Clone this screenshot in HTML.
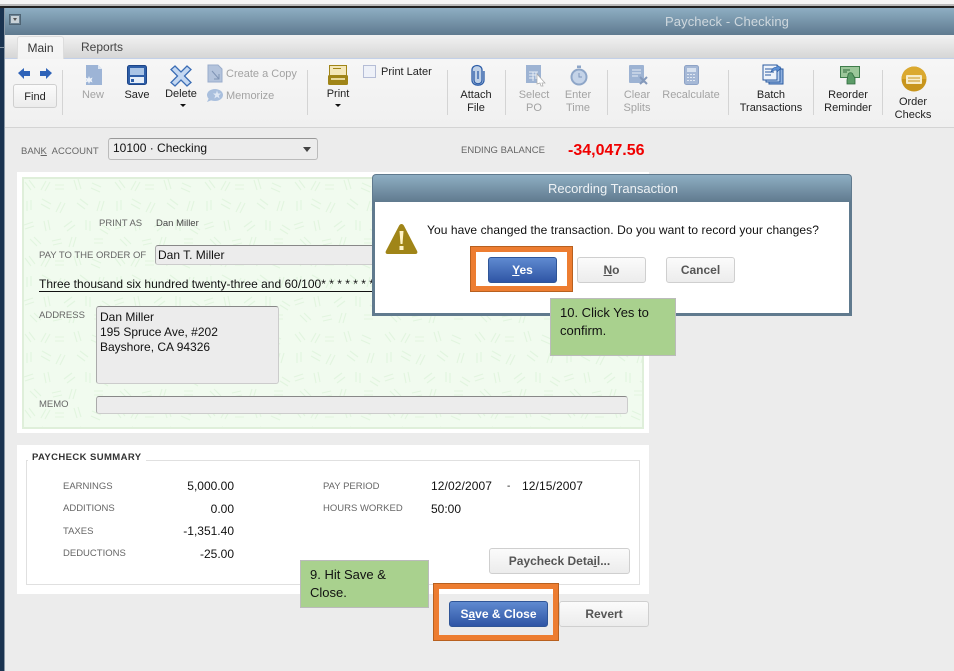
<!DOCTYPE html>
<html><head><meta charset="utf-8"><style>
html,body{margin:0;padding:0;width:954px;height:671px;overflow:hidden;background:#ececec}
body{position:relative;font-family:"Liberation Sans",sans-serif;color:#111}
.a{position:absolute;white-space:nowrap}
.t{position:absolute;white-space:nowrap;font-size:11px;line-height:13px;text-align:center;color:#222}
.d{color:#a3a3a3}
.sep{position:absolute;width:1px;background:#d4d4d4;top:70px;height:45px}
.l{position:absolute;white-space:nowrap;font-size:9.5px;line-height:12px;color:#666}
.v{position:absolute;white-space:nowrap;font-size:12px;line-height:14px;color:#111}
.r{text-align:right}
.btn{position:absolute;box-sizing:border-box;border:1px solid #cfcfcf;border-radius:3px;background:linear-gradient(#fbfbfb,#ececec);font-size:12px;font-weight:bold;color:#555;text-align:center;line-height:24px}
.pri{border:1px solid #2f5597;background:linear-gradient(#5f8ad0,#2f55a5);color:#fff}
.inp{position:absolute;box-sizing:border-box;background:#ececec;border:1px solid #ccc;border-top:1px solid #888;border-left-color:#aaa;border-radius:3px}
.org{position:absolute;box-sizing:border-box;border:6px solid #ed7d31;outline:1px solid #b8601f;outline-offset:-1px}
.note{position:absolute;box-sizing:border-box;background:#a9d18e;border:1px solid #bbb;font-size:13px;line-height:18px;color:#111;padding:5px 9px}
</style></head><body>
<div class="a" style="left:0;top:0;width:954px;height:4px;background:#f4f4f4"></div>
<div class="a" style="left:0;top:4px;width:954px;height:2px;background:#bbb"></div>
<div class="a" style="left:0;top:6px;width:954px;height:2px;background:#222"></div>
<div class="a" style="left:0;top:8px;width:4px;height:663px;background:#1a3350"></div>
<div class="a" style="left:0;top:47px;width:4px;height:1px;background:#7f8fa0"></div>
<div class="a" style="left:4px;top:8px;width:1px;height:663px;background:#8a98a6"></div>

<div class="a" style="left:5px;top:8px;width:949px;height:27px;background:linear-gradient(#8eaec3,#5f7a8f)"></div>
<div class="a" style="left:9px;top:14px;width:12px;height:11px;background:#6f8494;border:1px solid #4f6474;box-sizing:border-box"></div>
<div class="a" style="left:11px;top:16px;width:8px;height:7px;background:#c9d2d8"></div>
<div class="a" style="left:13px;top:18px;width:0;height:0;border:2px solid transparent;border-top:3px solid #555;border-bottom:0"></div>
<div class="a" style="left:665px;top:14px;font-size:13px;letter-spacing:.1px;line-height:16px;color:#cfd8de">Paycheck - Checking</div>

<div class="a" style="left:5px;top:35px;width:949px;height:23px;background:linear-gradient(#f2f2f2,#d6d6d6)"></div>
<div class="a" style="left:5px;top:58px;width:949px;height:1px;background:#c3d0e8"></div>
<div class="a" style="left:5px;top:59px;width:949px;height:68px;background:linear-gradient(#f6f6f6,#f0f0f0)"></div>
<div class="a" style="left:5px;top:127px;width:949px;height:1px;background:#d4d4d4"></div>
<div class="a" style="left:17px;top:36px;width:47px;height:23px;background:linear-gradient(#f6f6f6,#f3f3f3);border:1px solid #ddd;border-bottom:0;border-radius:3px 3px 0 0;box-sizing:border-box;font-size:12px;line-height:23px;text-align:center;color:#333">Main</div>
<div class="a" style="left:81px;top:40px;font-size:12px;line-height:15px;color:#444">Reports</div>

<svg class="a" style="left:0;top:60px" width="954" height="66" viewBox="0 60 954 66">
<path d="M18 73l6-5v3h6v5h-6v3z" fill="#2f63b8"/><path d="M52 73l-6-5v3h-6v5h6v3z" fill="#2f63b8"/>
<path d="M86 65h12l4 4v16h-16z" fill="#9db4d6"/><path d="M98 65v4h4z" fill="#dfe7f2"/><path d="M89 76l1 2.500 2.500-1-1 2.500 1 2.500-2.500-1-1 2.500-1-2.500-2.500 1 1-2.500-1-2.500 2.500 1z" fill="#eef3fa"/>
<rect x="127.500" y="65.500" width="19" height="19" rx="2" fill="#2f5fa8" stroke="#1d4588"/><rect x="130" y="68" width="14" height="7" fill="#a9c4e6"/><rect x="130" y="77" width="14" height="6" fill="#e6eef8"/><rect x="131" y="79" width="3" height="3" fill="#2f5fa8"/>
<path d="M175 66l6 6 6-6 4 3.500-6.500 6.500 6.500 6.500-4 3.500-6-6-6 6-4-3.500 6.500-6.500-6.500-6.500z" fill="#c4d8f2" stroke="#3b6db5" stroke-width="1.300"/>
<path d="M208 65h10l4 4v13h-14z" fill="#b3c3dc" stroke="#9aadcb"/><path d="M212 71l7 8m0-5v5h-5" fill="none" stroke="#7f94b5"/>
<ellipse cx="215" cy="95" rx="8" ry="6" fill="#a9bfdd"/><path d="M217 90.500l1 3 3 0-2.300 2 1 3-2.700-1.800-2.700 1.800 1-3-2.300-2 3 0z" fill="#dfe8f4"/><path d="M209 98l-2 4 5-2z" fill="#a9bfdd"/>
<rect x="329.500" y="65.500" width="17" height="10" fill="#f4e7b8" stroke="#a08518"/><rect x="333" y="68" width="8" height="1" fill="#a08518"/><rect x="328" y="75" width="20" height="10" rx="1.500" fill="#a08518"/><rect x="331" y="78" width="14" height="2" fill="#e7d89a"/>
<rect x="363.500" y="65.500" width="12" height="12" fill="#eef1f8" stroke="#b5bdd6"/>
<path d="M474 71v9c0 5 8 5 8 0V70c0-6-10-6-10 0v10c0 7 12 7 12 0v-9" fill="#5f8fce" fill-opacity=".35" stroke="#2f5fa8" stroke-width="1.300"/><path d="M478 71v8" stroke="#2f5fa8" stroke-width="1.300"/>
<rect x="526" y="65" width="15" height="18" fill="#9db3d3"/><path d="M529 72h9m-9 3h9m-9 3h5m-1-6v9m3-9v7" stroke="#e8eef6"/><path d="M537 74l8 9h-3l1 3-2 0-1-3-3 1z" fill="#fff" stroke="#a9a9a9" stroke-width=".7"/>
<circle cx="579" cy="77" r="7.500" fill="#c4d3e8" stroke="#8ea6c8" stroke-width="2"/><rect x="577" y="65.500" width="4" height="2.500" fill="#8ea6c8"/><path d="M579 73v4h3" stroke="#7f97bb" fill="none"/>
<rect x="629" y="65" width="15" height="18" rx="1" fill="#9db3d3"/><path d="M632 70h9m-9 3h9m-9 3h6" stroke="#e8eef6"/><path d="M640 77l7 7m0-7l-7 7" stroke="#8499ba" stroke-width="2"/>
<rect x="684.500" y="65.500" width="14" height="19" rx="2" fill="#a5b8d6" stroke="#8ea3c6"/><rect x="687" y="68" width="9" height="4" fill="#d7e1ef"/><path d="M687 74.500h9m-9 3h9m-9 3h9" stroke="#dfe7f2" stroke-dasharray="2 1"/>
<rect x="769" y="69" width="14" height="15" fill="#8fb0de" stroke="#2a5aa0"/><rect x="766" y="67" width="14" height="15" fill="#bcd2ee" stroke="#2a5aa0"/><rect x="763" y="65" width="14" height="15" fill="#eef3fa" stroke="#2a5aa0"/><path d="M765 69h9m-9 3h9m-9 3h6" stroke="#2a5aa0"/><path d="M771 72c1-4 4-5 6-5v-2l4 3-4 4v-2c-2 0-4 0-6 2z" fill="#5b90d6" stroke="#2a5aa0" stroke-width=".6"/>
<rect x="840.500" y="66.500" width="19" height="11" fill="#9cc79a" stroke="#3f7d4b"/><path d="M843 70h7m-7 2h4" stroke="#2f6a3c"/><path d="M848 75c0-3 5-3 5 0l2 3v6h-8v-4z" fill="#5c9c68" stroke="#2f6a3c" stroke-width=".8"/>
<circle cx="914" cy="79" r="12.500" fill="#c8951c"/><path d="M901.500 79a12.500 12.500 0 0 1 25 0z" fill="#dba92f"/><rect x="906" y="75" width="16" height="9" rx="1" fill="#f7ecc8"/><path d="M908 78h12m-12 3h12" stroke="#c8951c"/>
<path d="M180 104h6l-3 3z" fill="#111"/><path d="M335 104h6l-3 3z" fill="#111"/>
</svg>

<div class="btn" style="left:13px;top:84px;width:44px;height:24px;color:#222;font-weight:normal;font-size:11px;line-height:24px">Find</div>
<div class="sep" style="left:62px"></div>
<div class="t d" style="left:73px;top:88px;width:40px;margin-top:1px">New</div>
<div class="t" style="left:117px;top:89px;width:40px">Save</div>
<div class="t" style="left:161px;top:88px;width:40px">Delete</div>
<div class="t d" style="left:226px;top:68px;text-align:left">Create a Copy</div>
<div class="t d" style="left:226px;top:90px;text-align:left">Memorize</div>
<div class="sep" style="left:307px"></div>
<div class="t" style="left:318px;top:88px;width:40px">Print</div>
<div class="t" style="left:381px;top:66px;text-align:left">Print Later</div>
<div class="sep" style="left:447px"></div>
<div class="t" style="left:456px;top:89px;width:40px">Attach<br>File</div>
<div class="sep" style="left:505px"></div>
<div class="t d" style="left:514px;top:89px;width:40px">Select<br>PO</div>
<div class="t d" style="left:558px;top:89px;width:40px">Enter<br>Time</div>
<div class="sep" style="left:607px"></div>
<div class="t d" style="left:617px;top:89px;width:40px">Clear<br>Splits</div>
<div class="t d" style="left:661px;top:89px;width:60px">Recalculate</div>
<div class="sep" style="left:728px"></div>
<div class="t" style="left:736px;top:89px;width:70px">Batch<br>Transactions</div>
<div class="sep" style="left:813px"></div>
<div class="t" style="left:818px;top:89px;width:60px">Reorder<br>Reminder</div>
<div class="sep" style="left:882px"></div>
<div class="t" style="left:893px;top:96px;width:40px">Order<br>Checks</div>

<div class="l" style="left:21px;top:146px">BAN<u>K</u>&nbsp; ACCOUNT</div>
<div class="inp" style="left:108px;top:138px;width:210px;height:22px;border-color:#bbb;border-top-color:#999"></div>
<div class="a" style="left:113px;top:141px;font-size:12px;line-height:15px">10100 · Checking</div>
<div class="a" style="left:303px;top:147px;width:0;height:0;border:4px solid transparent;border-top:5px solid #444;border-bottom:0"></div>
<div class="l" style="left:461px;top:145px">ENDING BALANCE</div>
<div class="a" style="left:568px;top:142px;font-size:16px;line-height:18px;font-weight:bold;color:#f00000">-34,047.56</div>

<div class="a" style="left:17px;top:172px;width:632px;height:261px;background:#fff"></div>
<svg class="a" style="left:22px;top:177px" width="622" height="252">
<defs><pattern id="g" width="90" height="76" patternUnits="userSpaceOnUse"><rect width="90" height="76" fill="#f1fbef"/><path d="M3 5l6 8M7 3l6 8M24 4l-5 9M28 5l-5 9M33 8h9M33 12h9M52 3l3 10M56 2l3 10M70 6l9 4M69 11l9 4M5 24v10M9 23v10M20 22l9 5M19 27l9 5M39 25l-5 10M43 26l-5 10M58 22l8 6M55 26l8 6M78 24l-3 10M82 24l-3 10M2 48l9-3M3 52l9-3M22 44l2 10M26 43l2 10M42 50l8-6M45 54l8-6M64 43v10M68 44v10M80 48l8 5M78 52l8 5M8 62l7 7M12 60l7 7M30 64l9-2M31 68l9-2M50 60l-3 10M54 60l-3 10M72 62h9M72 66h9" stroke="#e2f5df" stroke-width="1.100" fill="none"/></pattern></defs>
<rect width="622" height="252" fill="url(#g)"/><rect x="1" y="1" width="620" height="250" fill="none" stroke="#dfefda" stroke-width="2"/></svg>
<div class="l" style="left:99px;top:218px">PRINT AS</div>
<div class="a" style="left:156px;top:218px;font-size:9.5px;line-height:12px;color:#444">Dan Miller</div>
<div class="l" style="left:39px;top:250px">PAY TO THE ORDER OF</div>
<div class="inp" style="left:155px;top:245px;width:230px;height:20px"></div>
<div class="a" style="left:158px;top:248px;font-size:12px;line-height:15px">Dan T. Miller</div>
<div class="a" style="left:39px;top:277px;width:340px;height:14px;border-bottom:1px solid #111;font-size:12px;line-height:14px;overflow:hidden">Three thousand six hundred twenty-three and 60/100* * * * * * * *</div>
<div class="l" style="left:39px;top:310px">ADDRESS</div>
<div class="inp" style="left:96px;top:306px;width:183px;height:78px"></div>
<div class="a" style="left:100px;top:310px;font-size:12px;line-height:15px">Dan Miller<br>195 Spruce Ave, #202<br>Bayshore, CA 94326</div>
<div class="l" style="left:39px;top:399px">MEMO</div>
<div class="inp" style="left:96px;top:396px;width:532px;height:18px"></div>

<div class="a" style="left:17px;top:445px;width:632px;height:149px;background:#fff"></div>
<div class="a" style="left:26px;top:460px;width:612px;height:123px;box-sizing:content-box;border:1px solid #e0e0e0"></div>
<div class="a" style="left:28px;top:452px;padding:0 4px;background:#fff;font-size:9.5px;letter-spacing:.4px;line-height:12px;font-weight:bold;color:#333">PAYCHECK SUMMARY</div>
<div class="l" style="left:63px;top:481px">EARNINGS</div>
<div class="l" style="left:63px;top:503px">ADDITIONS</div>
<div class="l" style="left:63px;top:526px">TAXES</div>
<div class="l" style="left:63px;top:548px">DEDUCTIONS</div>
<div class="v r" style="left:154px;top:479px;width:80px">5,000.00</div>
<div class="v r" style="left:154px;top:502px;width:80px">0.00</div>
<div class="v r" style="left:154px;top:524px;width:80px">-1,351.40</div>
<div class="v r" style="left:154px;top:547px;width:80px">-25.00</div>
<div class="l" style="left:323px;top:481px">PAY PERIOD</div>
<div class="l" style="left:323px;top:503px">HOURS WORKED</div>
<div class="v" style="left:431px;top:479px;letter-spacing:.1px">12/02/2007</div>
<div class="v" style="left:507px;top:480px;font-size:10px">-</div>
<div class="v" style="left:522px;top:479px;letter-spacing:.1px">12/15/2007</div>
<div class="v" style="left:431px;top:502px">50:00</div>
<div class="btn" style="left:489px;top:548px;width:141px;height:26px">Paycheck Deta<u>i</u>l...</div>

<div class="org" style="left:433px;top:583px;width:126px;height:58px"></div>
<div class="btn pri" style="left:449px;top:601px;width:99px;height:26px">S<u>a</u>ve &amp; Close</div>
<div class="btn" style="left:559px;top:601px;width:90px;height:26px">Revert</div>
<div class="note" style="left:300px;top:560px;width:129px;height:48px">9. Hit Save &amp;<br>Close.</div>

<div class="a" style="left:372px;top:174px;width:480px;height:142px;background:#607a8e;border-radius:4px 4px 0 0"></div>
<div class="a" style="left:373px;top:175px;width:478px;height:27px;background:linear-gradient(#8eaec3,#607a8e);border-radius:3px 3px 0 0;text-align:center;font-size:13px;line-height:28px;color:#eef2f5"><span style="margin-left:2px">Recording Transaction</span></div>
<div class="a" style="left:375px;top:202px;width:474px;height:111px;background:#fff"></div>
<svg class="a" style="left:385px;top:222px" width="33" height="33"><path d="M16.500 2c1 0 2 .8 2.600 2l13 25c.8 1.600 0 3-1.600 3H2.500c-1.600 0-2.400-1.400-1.600-3l13-25C14.500 2.800 15.500 2 16.500 2z" fill="#a08518"/><path d="M14.500 9h4l-1 13h-2z" fill="#fff4c8"/><rect x="14.500" y="24" width="4" height="4" fill="#fff4c8"/></svg>
<div class="a" style="left:427px;top:222px;margin-top:1px;font-size:12px;letter-spacing:.07px;line-height:15px;color:#111">You have changed the transaction. Do you want to record your changes?</div>
<div class="org" style="left:470px;top:246px;width:103px;height:46px"></div>
<div class="btn pri" style="left:488px;top:257px;width:69px;height:26px"><u>Y</u>es</div>
<div class="btn" style="left:577px;top:257px;width:69px;height:26px"><u>N</u>o</div>
<div class="btn" style="left:666px;top:257px;width:69px;height:26px">Cancel</div>
<div class="note" style="left:550px;top:298px;width:126px;height:58px">10. Click Yes to<br>confirm.</div>
</body></html>
